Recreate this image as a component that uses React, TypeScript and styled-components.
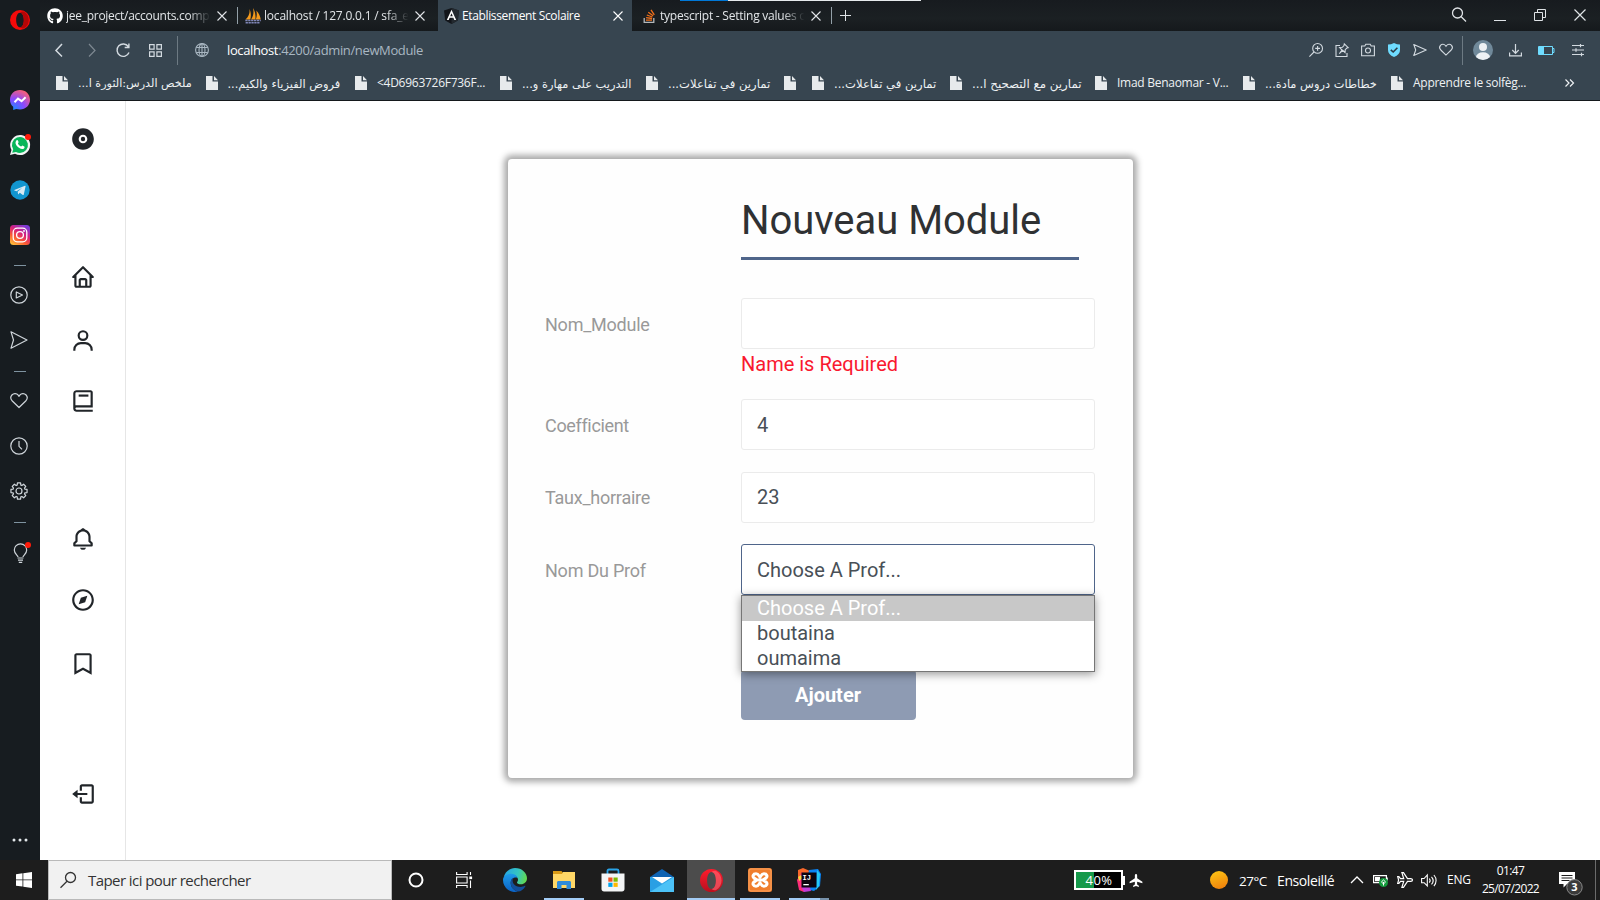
import React from 'react';
import styled, { createGlobalStyle, css } from 'styled-components';
import { BiHome, BiUser, BiBook, BiBell, BiCompass, BiBookmark, BiLogOut, BiSolidDisc } from 'react-icons/bi';
import { FaGithub } from 'react-icons/fa';

const ui = `"Open Sans", "Noto Sans", sans-serif`;

const Global = createGlobalStyle`
  html, body { margin: 0; background: #fff; }
  *, *::before, *::after { box-sizing: border-box; }
  svg { display: block; flex: none; overflow: visible; }
`;

const Desktop = styled.div`
  width: 1600px;
  height: 900px;
  overflow: hidden;
  display: flex;
  flex-direction: column;
  font-family: ${ui};
`;
const Browser = styled.div`
  height: 860px;
  display: flex;
`;

/* ---------- Opera side panel ---------- */
const SidePanel = styled.aside`
  width: 40px;
  background: #171c20;
  color: #cfd5da;
  display: flex;
  flex-direction: column;
  align-items: center;
`;
const PanelLogo = styled.div`
  height: 77.5px;
  padding-top: 10px;
`;
const PanelItem = styled.div<{ $line?: boolean }>`
  position: relative;
  height: 45px;
  display: flex;
  align-items: center;
  padding: ${p => (p.$line ? '0 2px 1.5px 0' : '0')};
`;
const PanelRule = styled.div`
  height: 16px;
  width: 12px;
  display: flex;
  align-items: center;
  &::before { content: ''; width: 12px; height: 1px; background: #7f93a0; }
`;
const Dot = styled.i`
  position: absolute;
  right: -1px;
  top: 11px;
  width: 6px;
  height: 6px;
  border-radius: 50%;
  background: #ff1b0a;
`;
const PanelMore = styled.div`
  margin-top: auto;
  height: 40px;
`;

const Main = styled.div`
  flex: 1;
  min-width: 0;
  display: flex;
  flex-direction: column;
`;

/* ---------- Tabs ---------- */
const TabBar = styled.div`
  position: relative;
  height: 31px;
  display: flex;
  align-items: center;
  background: linear-gradient(#171b1f, #1b2023 60%, #15191c);
  color: #dfe3e6;
  font-size: 12px;
`;
const Tab = styled.div<{ $w: number; $pad: number; $active?: boolean }>`
  width: ${p => p.$w}px;
  padding-left: ${p => p.$pad}px;
  height: 31px;
  display: flex;
  align-items: center;
  background: ${p => (p.$active ? '#374550' : 'transparent')};
  color: ${p => (p.$active ? '#fff' : '#e2e5e8')};
`;
const TabIcon = styled.span<{ $w: number }>`
  width: ${p => p.$w}px;
  flex: none;
`;
const TabTitle = styled.span<{ $ls: number; $fade?: boolean }>`
  width: 146px;
  flex: none;
  margin-right: 5px;
  white-space: nowrap;
  line-height: 18px;
  letter-spacing: ${p => p.$ls}px;
  ${p => p.$fade && css`mask-image: linear-gradient(90deg, #000 84%, transparent 99%);`}
`;
const TabSplit = styled.div`
  width: 1px;
  height: 17px;
  background: #93a0a8;
`;
const TopStrip = styled.div`
  position: absolute;
  left: 640px;
  top: 0;
  width: 241px;
  height: 1px;
  background: linear-gradient(90deg, #0078d7 48px, #e6eaec 48px);
`;
const NewTab = styled.div`
  padding-left: 8px;
  flex: 1;
`;
const WindowButtons = styled.div`
  display: flex;
  gap: 28px;
  padding: 0 14px 1px 0;
  align-items: center;
`;

/* ---------- Address bar ---------- */
const Toolbar = styled.div`
  height: 38px;
  display: flex;
  align-items: center;
  background: #374550;
  color: #d3dae0;
`;
const NavButtons = styled.div`
  width: 137px;
  padding-left: 11px;
  display: grid;
  grid-template-columns: 33px 32px 33px 30px;
  align-items: center;
`;
const BarSplit = styled.div`
  width: 1px;
  height: 29px;
  background: #6d7a83;
`;
const Address = styled.div`
  flex: 1;
  display: flex;
  align-items: center;
  gap: 18px;
  padding-left: 17px;
  font-size: 13px;
  letter-spacing: -0.37px;
  line-height: 18px;
  color: #a9b7c2;
  b { font-weight: 400; color: #fff; }
`;
const ToolIcons = styled.div<{ $gap: number; $l: number; $r: number }>`
  display: flex;
  align-items: center;
  gap: ${p => p.$gap}px;
  padding: 0 ${p => p.$r}px 0 ${p => p.$l}px;
`;

/* ---------- Bookmarks ---------- */
const Bookmarks = styled.div`
  height: 32px;
  padding: 0 0 3px 16px;
  display: grid;
  grid-template-columns: 149.5px 149.5px 145px 146px 138px 28px 138px 145px 148px 148px 174px 1fr;
  align-items: center;
  background: #374550;
  border-bottom: 1px solid #14181b;
  color: #eef1f3;
  font-size: 12px;
`;
const Bookmark = styled.div`
  display: flex;
  align-items: center;
  gap: 10px;
`;
const BookmarkLabel = styled.span<{ $size: number; $rtl?: boolean }>`
  white-space: nowrap;
  line-height: 16px;
  padding-top: ${p => (p.$rtl ? 1 : 0)}px;
  font-size: ${p => p.$size}px;
  letter-spacing: ${p => (p.$rtl ? '0' : '-0.27px')};
  direction: ${p => (p.$rtl ? 'rtl' : 'ltr')};
  font-family: ${p => (p.$rtl ? '"DejaVu Sans", sans-serif' : ui)};
`;

/* ---------- Web page ---------- */
const Page = styled.div`
  flex: 1;
  display: flex;
  background: #fff;
`;
const AppNav = styled.nav`
  width: 86px;
  border-right: 1px solid #e6e6e6;
  color: #212529;
  display: flex;
  flex-direction: column;
  align-items: center;
`;
const NavIcon = styled.div<{ $gap: number }>`
  margin-top: ${p => p.$gap}px;
  height: 26px;
  font-size: 26px;
`;
const Content = styled.main`
  flex: 1;
  padding: 58px 0 0 382px;
  font-family: Roboto, sans-serif;
`;
const Card = styled.section`
  width: 625px;
  height: 619px;
  padding: 36px 38px 0 37px;
  border-radius: 4px;
  background: #fefefe;
  box-shadow: 0 0 6px 4px #a9a9a9;
`;
const Heading = styled.h1`
  margin: 0 0 38px 196px;
  width: 338px;
  height: 65px;
  padding-top: 2px;
  border-bottom: 3px solid #4f658a;
  font-size: 40px;
  font-weight: 400;
  line-height: 48px;
  letter-spacing: -0.04px;
  color: #2f3133;
`;
const Row = styled.div<{ $after: number }>`
  display: grid;
  grid-template-columns: 196px 354px;
  margin-bottom: ${p => p.$after}px;
`;
const Label = styled.label<{ $line?: number; $ls?: number }>`
  font-size: 18px;
  letter-spacing: ${p => p.$ls ?? -0.24}px;
  line-height: ${p => p.$line ?? 53}px;
  height: 51px;
  color: #999;
`;
const Field = styled.div`
  position: relative;
`;
const Input = styled.div<{ $focus?: boolean; $line?: number }>`
  height: 51px;
  padding: 0 15px;
  border: 1px solid ${p => (p.$focus ? '#4f658a' : '#ebebeb')};
  border-radius: 3px;
  background: #fff;
  font-size: 20px;
  line-height: ${p => p.$line ?? 51}px;
  color: #495057;
`;
const FieldError = styled.div`
  margin-bottom: -30px;
  height: 30px;
  line-height: 30px;
  font-size: 20px;
  color: #f9182f;
`;
const Menu = styled.ul`
  position: absolute;
  left: 0;
  top: 51px;
  width: 354px;
  margin: 0;
  padding: 0;
  list-style: none;
  border: 1px solid #767676;
  background: #fff;
  box-shadow: 0 2px 9px rgba(0, 0, 0, 0.42);
`;
const Option = styled.li<{ $on?: boolean }>`
  height: 25px;
  padding-left: 15px;
  font-size: 20px;
  line-height: 25px;
  color: ${p => (p.$on ? '#fff' : '#495057')};
  background: ${p => (p.$on ? '#c8c8c8' : '#fff')};
`;
const Submit = styled.button`
  display: block;
  width: 175px;
  height: 50px;
  margin-left: 196px;
  border: 0;
  border-radius: 4px;
  padding: 0 1px 0 0;
  background: #8e9bb3;
  color: #fff;
  font: bold 20px/50px Roboto, sans-serif;
`;

/* ---------- Taskbar ---------- */
const Taskbar = styled.footer`
  height: 40px;
  display: flex;
  background: #1d1d1d;
  color: #fff;
`;
const StartButton = styled.div`
  width: 48px;
  display: grid;
  place-items: center;
`;
const SearchBox = styled.div`
  width: 344px;
  border: 1px solid #b9b9b9;
  background: #f1f1f1;
  display: flex;
  align-items: center;
  gap: 12px;
  padding-left: 11px;
  color: #333;
  font-size: 15px;
  letter-spacing: -0.57px;
`;
const Tile = styled.div<{ $gap?: number; $active?: boolean; $bar?: 'short' | 'full' | 'split' }>`
  width: 48px;
  margin-left: ${p => p.$gap ?? 0}px;
  display: flex;
  align-items: center;
  justify-content: center;
  position: relative;
  background: ${p => (p.$active ? '#4c4c4c' : 'transparent')};
  ${p => p.$bar && css`
    &::after {
      content: '';
      position: absolute;
      bottom: 0;
      left: ${p.$bar === 'full' ? 0 : 4}px;
      right: ${p.$bar === 'full' ? 0 : 4}px;
      height: 2px;
      background: ${p.$bar === 'split' ? 'linear-gradient(90deg, #a3ccf5 31px, #7892ab 31px)' : '#a3ccf5'};
    }
  `}
`;
const Tray = styled.div`
  margin-left: auto;
  width: 526px;
  display: grid;
  grid-template-columns: 61px 75px 29px 38px 73px 23px 24px 24px 26px 21px 87px 32px 1fr;
  align-items: center;
`;
const BatteryGauge = styled.div`
  position: relative;
  width: 49px;
  height: 20px;
  border: 2px solid #fff;
  background: linear-gradient(90deg, #16994a 18px, #000 18px);
  text-align: center;
  font-size: 13px;
  line-height: 16px;
  letter-spacing: 0.4px;
  padding-left: 1px;
  &::after {
    content: '';
    position: absolute;
    right: -4px;
    top: 4px;
    width: 2px;
    height: 9px;
    background: #fff;
  }
`;
const Sun = styled.div`
  width: 18px;
  height: 18px;
  border-radius: 50%;
  background: linear-gradient(160deg, #ffc814, #ee7a0c);
`;
const TrayText = styled.span<{ $size: number; $ls: number; $up?: boolean }>`
  font-size: ${p => p.$size}px;
  letter-spacing: ${p => p.$ls}px;
  line-height: 18px;
  white-space: nowrap;
  padding: ${p => (p.$up ? '0 0 1px' : '1px 0 0')};
`;
const Clock = styled.div`
  text-align: center;
  font-size: 12px;
  line-height: 18px;
  letter-spacing: -0.65px;
  padding: 0 2px 1px 0;
`;
const Notifications = styled.div`
  padding: 7px 0 0 4px;
`;
const ShowDesktop = styled.div`
  height: 40px;
  border-left: 1px solid #6b6b6b;
  justify-self: end;
  width: 5px;
`;

/* ---------- Drawings ---------- */
type LineProps = { w?: number; h?: number; vb?: string; sw?: number; children: React.ReactNode };
const Line = ({ w = 14, h, vb, sw = 1, children }: LineProps) => (
  <svg width={w} height={h ?? w} viewBox={vb ?? `0 0 ${w} ${h ?? w}`} fill="none" stroke="currentColor" strokeWidth={sw}>
    {children}
  </svg>
);
const Close = () => <Line w={10} sw={1.1}><path d="M.5.5l9 9M9.500.5l-9 9" /></Line>;
const PageIcon = () => (
  <svg width="12" height="14" viewBox="0 0 12 14" fill="#e7eaec">
    <path d="M0 0h6.500v5.500H12V14H0z" /><path d="M8 0l4 4.300H8z" />
  </svg>
);
const OperaLogo = ({ size, id }: { size: number; id: string }) => (
  <svg width={size} height={size} viewBox="0 0 24 24">
    <defs>
      <linearGradient id={id} x1="0" y1="0" x2="0" y2="1">
        <stop offset="0" stopColor="#ff1b2d" /><stop offset="1" stopColor="#b8101f" />
      </linearGradient>
    </defs>
    <path fillRule="evenodd" fill={id === 'op1' ? '#f50a0a' : `url(#${id})`} d="M12 0a12 12 0 100 24a12 12 0 000-24zM12 3.200c2.900 0 4.600 4 4.600 8.800s-1.700 8.800-4.600 8.800S7.400 16.800 7.400 12 9.100 3.200 12 3.200z" />
    <path fill={id === 'op1' ? '#b30606' : '#ff6b76'} opacity={id === 'op1' ? 1 : 0.6} d="M12 3.200c1.500-1.200 3.200-1.700 4.800-1.200C20.500 4 22.500 8 22.500 12s-2 8-5.700 10c-1.600.5-3.300 0-4.800-1.200 2.900 0 4.600-4 4.600-8.800S14.900 3.200 12 3.200z" />
  </svg>
);
const Messenger = () => (
  <svg width="20" height="20" viewBox="0 0 20 20">
    <defs>
      <radialGradient id="ms" cx=".2" cy="1" r="1.1">
        <stop offset="0" stopColor="#1a8cff" /><stop offset=".5" stopColor="#8a48ff" /><stop offset="1" stopColor="#ff6070" />
      </radialGradient>
    </defs>
    <path fill="url(#ms)" d="M10 0C4.300 0 0 4.200 0 9.700c0 2.900 1.200 5.400 3.200 7.100V20l3-1.100c1.200.3 2.500.5 3.800.5 5.700 0 10-4.200 10-9.700S15.700 0 10 0z" />
    <path fill="none" stroke="#fff" strokeWidth="2" d="M4.500 12.300L8 8.600l3.600 2.500 4-3.800" />
  </svg>
);
const WhatsApp = () => (
  <svg width="20" height="20" viewBox="0 0 20 20">
    <path fill="#f2f4f4" d="M0 20l1.500-5A10 10 0 1110 20a10 10 0 01-5-1.300z" />
    <path fill="#08b65a" d="M2.200 17.800l1-3.500A8 8 0 1110 18a8 8 0 01-4-1.100z" />
    <path fill="#fff" d="M6.600 5.300c.6-.5 1.100-.3 1.400.4l.6 1.400c.1.500-.7 1.100-.7 1.500.7 1.400 1.700 2.300 3.200 3 .5 0 1-1.100 1.400-1l1.700.8c.7.300.3 1.500-.2 2-1.200 1-2.900.7-4.700-.3-1.900-1.100-3.300-2.900-3.700-4.500-.2-1.300.2-2.500 1-3.300z" />
  </svg>
);
const Telegram = () => (
  <svg width="20" height="20" viewBox="0 0 20 20">
    <circle cx="10" cy="10" r="9.700" fill="#1195cf" />
    <path fill="#d6e9f3" d="M4.300 9.900L15 5.700c.5-.1.700.1.600.6l-1.800 8.200c-.1.600-.5.700-1 .4L9.800 12.700l-1.600 1.700-.6-2.700 4.600-4-5.700 3.500-2.200-.7z" />
  </svg>
);
const Instagram = () => (
  <svg width="20" height="20" viewBox="0 0 20 20">
    <defs>
      <linearGradient id="ig" x1=".1" y1="1" x2=".7" y2="0">
        <stop offset="0" stopColor="#ffc83c" /><stop offset=".35" stopColor="#fb5a32" /><stop offset=".65" stopColor="#d6207e" /><stop offset="1" stopColor="#7a3ad6" />
      </linearGradient>
    </defs>
    <rect width="20" height="20" rx="3.500" fill="url(#ig)" />
    <g fill="none" stroke="#fff" strokeWidth="1.300">
      <rect x="3.200" y="3.200" width="13.600" height="13.600" rx="4" /><circle cx="10" cy="10" r="3.400" />
    </g>
    <circle cx="14" cy="6" r=".9" fill="#fff" />
  </svg>
);
const heart = 'M9 15.500L2.300 9C.6 7.200.4 4.700 1.900 3 3.700 1 6.700 1.200 8.200 3.200L9 4.300l.8-1.100C11.300 1.200 14.300 1 16.100 3c1.500 1.700 1.300 4.200-.4 6z';
const sendShape = 'M1 .8L17 9 1 17.200 3.500 9z';
const gear = (() => {
  const pts: string[] = [];
  for (let i = 0; i < 8; i++) {
    const a = (i * Math.PI) / 4;
    [[-0.3, 6.2], [-0.19, 8.2], [0.19, 8.2], [0.3, 6.2]].forEach(([d, r]) =>
      pts.push(`${(9 + r * Math.sin(a + d)).toFixed(2)} ${(9 - r * Math.cos(a + d)).toFixed(2)}`));
  }
  return `M${pts.join('L')}z`;
})();

const Angular = () => (
  <svg width="15" height="16" viewBox="0 0 15 16">
    <path fill="#12151a" d="M7.500 0L15 2.600l-1.200 9.800L7.500 16l-6.300-3.600L0 2.600z" />
    <path fill="#23292f" d="M7.500 0L15 2.600l-1.200 9.800L7.500 16z" />
    <path fill="#fff" fillRule="evenodd" d="M7.500 1.800l4.700 10.300h-1.900l-.9-2.300H5.600l-.9 2.300H2.800zM7.500 5.300L6.200 8.300h2.600z" />
  </svg>
);
const Sails = () => (
  <svg width="16" height="16" viewBox="0 0 16 16">
    <path fill="#f59a1c" d="M4.500 1C5 5 4 8.500.5 11.500H5.300C6.200 8 6 4 4.500 1zM8 0c1 4 .5 8-2 11.500h4.400C10.900 7.500 10 3 8 0zM11.300 2.500c.8 3.500.6 6-.5 9h4.900c-.4-3.500-1.900-6.500-4.400-9z" />
    <path fill="none" stroke="#8087b8" strokeWidth="1.500" strokeDasharray="2.300 .6" d="M.3 12.500h15.500M.6 14.700h14" />
  </svg>
);
const StackOverflow = () => (
  <svg width="13" height="14" viewBox="0 0 13 14" fill="none">
    <path stroke="#b3b7ba" strokeWidth="1.300" d="M1.200 9v4.300h9.600V9" />
    <path stroke="#f2701a" strokeWidth="1.300" d="M3 11.200h6M3.100 8.700l6 .8M3.800 6l5.600 2M5.300 3.200l4.800 3.600M8 .9l3.300 5" />
  </svg>
);
const Edge = () => (
  <svg width="24" height="24" viewBox="0 0 24 24">
    <defs>
      <linearGradient id="e1" x1="0" y1=".3" x2="1" y2=".5"><stop offset="0" stopColor="#25a5e6" /><stop offset=".6" stopColor="#35c6c0" /><stop offset="1" stopColor="#62d94f" /></linearGradient>
      <linearGradient id="e2" x1="0" y1="0" x2="0" y2="1"><stop offset="0" stopColor="#1d9bea" /><stop offset="1" stopColor="#0b62c4" /></linearGradient>
    </defs>
    <path fill="url(#e1)" d="M.6 9.500C1.800 4 6.500 0 12 0c7 0 12 5 12 10.300 0 3.500-2.700 6-6 6-2.400 0-4-.9-4-1.800 0-.7 1-1 1-2.800 0-2.400-2.500-4.700-6-4.700-3.800 0-6.600 1-8.400 2.500z" />
    <path fill="url(#e2)" d="M0 12c0-3.500 3.700-6.200 8-6.200 3 0 5.700 1.400 6.700 3.900-4-1.200-7 1.300-7 5.300 0 4.500 3.500 7.500 7.300 8.600A12 12 0 010 12z" />
    <path fill="#134f9b" d="M7.700 15c0-2.500 1-4.500 2.800-5.400-.7 1.200-.9 2-.9 3.200 0 3.500 3.800 6.200 7.900 6.200 1.700 0 3.300-.6 4.300-1.200.5-.2.800.1.500.6-1.600 3-4.300 4.800-7.300 5.200-3.800-1.100-7.300-4.100-7.300-8.600z" />
  </svg>
);
const Explorer = () => (
  <svg width="22" height="20" viewBox="0 0 22 20">
    <path fill="#d99a16" d="M0 1h8.500l1.500 2v3H0z" />
    <path fill="#ffd766" d="M0 4h9l1-2h12v16H0z" />
    <path fill="#2f8bd9" d="M4 19v-6.500c0-1 .7-1.500 1.500-1.500h11c.8 0 1.500.5 1.500 1.500V19h-4.500v-4h-5v4z" />
  </svg>
);
const Store = () => (
  <svg width="24" height="24" viewBox="0 0 24 24">
    <path fill="none" stroke="#2aa4e8" strokeWidth="1.800" d="M6.500 7V3c0-.8.500-1.500 1.500-1.500h8c1 0 1.500.7 1.500 1.500v4" />
    <path fill="#f4f5f6" d="M.5 5.500h23V21c0 1.500-1 2.500-2.500 2.500H3C1.500 23.500.5 22.500.5 21z" />
    <path fill="#f25022" d="M7.300 9.500h4.200v4.200H7.300z" /><path fill="#7fba00" d="M12.500 9.500h4.200v4.200h-4.200z" />
    <path fill="#00a4ef" d="M7.300 14.700h4.200v4.200H7.300z" /><path fill="#ffb900" d="M12.500 14.700h4.200v4.200h-4.200z" />
  </svg>
);
const Mail = () => (
  <svg width="24" height="23" viewBox="0 0 24 23">
    <path fill="#0e63b3" d="M0 8L12 0l12 8-2 2H2z" />
    <path fill="#2a9fe4" d="M0 8h24v15H0z" />
    <path fill="#4cc2f7" d="M24 8v15H0z" />
    <path fill="#fff" d="M2 8h20l-10 6.500z" />
  </svg>
);
const Xampp = () => (
  <svg width="24" height="24" viewBox="0 0 24 24">
    <rect width="24" height="24" rx="2.500" fill="#f07d2c" /><rect x="1" y="1" width="22" height="22" rx="2" fill="none" stroke="#f9a563" />
    <path fill="none" stroke="#fff" strokeWidth="3" strokeLinejoin="round" d="M12 9C10.500 8 11 5.800 8 5.800S4.200 8.500 6 10s2 1 2.600 2c-.6 1-.8.500-2.600 2s-1 4.200 2 4.200S10.500 16 12 15c1.500 1 1 3.200 4 3.200s3.800-2.700 2-4.200-2-1-2.600-2c.6-1 .8-.5 2.600-2s1-4.200-2-4.200S13.500 8 12 9zM9 12h6" />
  </svg>
);
const IdeaText = styled.text`
  font: bold 8px "Liberation Mono", monospace;
  fill: #fff;
`;
const Idea = () => (
  <svg width="24" height="24" viewBox="0 0 24 24">
    <path fill="#f9682a" d="M1 2l5-2 7 3-6 8-6 2z" /><path fill="#fe2d78" d="M0 12l5-8 7 6-5 14-5-2z" />
    <path fill="#0a84f5" d="M12 2l9-1 3 5-1 12-6 5-8-2z" /><path fill="#25c8f5" d="M20 2l3 4-1 12-3 4z" /><path fill="#c03bd8" d="M4 18l8-2 2 7-7 1z" />
    <path fill="#fdd13a" d="M1 9l3-2 2 3-4 3z" />
    <path fill="#0b0510" d="M4.500 4.500h15v15h-15z" /><path fill="#fff" d="M6.300 16h5.500v1.300H6.300z" />
    <IdeaText x="5.600" y="11.600" textLength="8.500" lengthAdjust="spacingAndGlyphs">IJ</IdeaText>
  </svg>
);
const planePath = 'M8 .5c.8 0 1.300.8 1.300 1.800v3.200l6 4v1.600l-6-1.800v3.200l2 1.600v1.200L8 14.400l-3.300.9v-1.200l2-1.600V9.300l-6 1.800V9.500l6-4V2.300C6.700 1.300 7.200.5 8 .5z';
const BadgeText = styled.text`
  font: bold 11px ${ui};
  fill: #fff;
  text-anchor: middle;
`;

/* ---------- Data ---------- */
const bookmarks: { text: string; size: number; rtl?: boolean }[] = [
  { text: 'ملخص الدرس:الثورة ا...', size: 11.2, rtl: true },
  { text: 'فروض الفيزياء والكيم...', size: 11.4, rtl: true },
  { text: '<4D6963726F736F...', size: 12 },
  { text: 'التدريب على مهارة و...', size: 11.4, rtl: true },
  { text: 'تمارين في تفاعلات...', size: 11.6, rtl: true },
  { text: '', size: 12 },
  { text: 'تمارين في تفاعلات...', size: 11.6, rtl: true },
  { text: 'تمارين مع التصحيح ا...', size: 11.8, rtl: true },
  { text: 'Imad Benaomar - V...', size: 12 },
  { text: 'خطاطات دروس مادة...', size: 11.4, rtl: true },
  { text: 'Apprendre le solfèg...', size: 12 },
];
const navIcons = [
  { Icon: BiSolidDisc, gap: 25 },
  { Icon: BiHome, gap: 112 },
  { Icon: BiUser, gap: 38 },
  { Icon: BiBook, gap: 34 },
  { Icon: BiBell, gap: 112 },
  { Icon: BiCompass, gap: 35 },
  { Icon: BiBookmark, gap: 38 },
  { Icon: BiLogOut, gap: 104 },
];

const Side = () => (
  <SidePanel>
    <PanelLogo><OperaLogo size={20} id="op1" /></PanelLogo>
    <PanelItem><Messenger /></PanelItem>
    <PanelItem><WhatsApp /><Dot /></PanelItem>
    <PanelItem><Telegram /></PanelItem>
    <PanelItem><Instagram /></PanelItem>
    <PanelRule />
    <PanelItem $line><Line w={18} sw={1.2}><circle cx="9" cy="9" r="8.200" /><path d="M6.300 6v6l6.200-3z" strokeLinejoin="round" /></Line></PanelItem>
    <PanelItem $line><Line w={18} sw={1.2}><path d={sendShape} strokeLinejoin="round" /></Line></PanelItem>
    <PanelRule />
    <PanelItem $line><Line w={18} sw={1.2}><path d={heart} strokeLinejoin="round" /></Line></PanelItem>
    <PanelItem $line><Line w={18} sw={1.2}><circle cx="9" cy="9" r="8.200" /><path d="M9 4v5.300l3 3" /></Line></PanelItem>
    <PanelItem $line><Line w={18} sw={1.2}><path d={gear} strokeLinejoin="round" /><circle cx="9" cy="9" r="3" /></Line></PanelItem>
    <PanelRule />
    <PanelItem>
      <Line w={20} sw={1.2}><path d="M8 14c0-1.500-3.700-3-3.700-7a6.200 6.200 0 0112.400 0c0 4-3.700 5.500-3.700 7M7.500 15h6M8 17.200h5M8.800 19.400h3.400" /></Line>
      <Dot />
    </PanelItem>
    <PanelMore>
      <svg width="16" height="4" viewBox="0 0 16 4" fill="#e3e7ea" transform="translate(0 18)"><circle cx="2" cy="2" r="1.500" /><circle cx="8" cy="2" r="1.500" /><circle cx="14" cy="2" r="1.500" /></svg>
    </PanelMore>
  </SidePanel>
);

const Tabs = () => (
  <TabBar>
    <TopStrip />
    <Tab $w={197} $pad={7}>
      <TabIcon $w={19}><FaGithub size={16} color="#fff" /></TabIcon>
      <TabTitle $ls={-0.27} $fade>jee_project/accounts.comp</TabTitle>
      <Close />
    </Tab>
    <TabSplit />
    <Tab $w={200} $pad={7}>
      <TabIcon $w={19}><Sails /></TabIcon>
      <TabTitle $ls={-0.2} $fade>localhost / 127.0.0.1 / sfa_e</TabTitle>
      <Close />
    </Tab>
    <Tab $w={194} $pad={6} $active>
      <TabIcon $w={18}><Angular /></TabIcon>
      <TabTitle $ls={-0.36}>Etablissement Scolaire</TabTitle>
      <Close />
    </Tab>
    <Tab $w={199} $pad={11}>
      <TabIcon $w={17}><StackOverflow /></TabIcon>
      <TabTitle $ls={-0.24} $fade>typescript - Setting values o</TabTitle>
      <Close />
    </Tab>
    <TabSplit />
    <NewTab><Line w={11}><path d="M5.500 0v11M0 5.500h11" /></Line></NewTab>
    <WindowButtons>
      <Line w={14} sw={1.3}><circle cx="5.500" cy="5" r="5" /><path d="M9 8.500l5 5" /></Line>
      <Line w={12} h={12}><path d="M0 11.500h12" /></Line>
      <Line w={12}><path d="M.5 3.500h8v8h-8zM3.500 3.500v-3h8v8h-3" /></Line>
      <Line w={12} sw={1.2}><path d="M.5.5l11 11M11.500.5l-11 11" /></Line>
    </WindowButtons>
  </TabBar>
);

const AddressBar = () => (
  <Toolbar>
    <NavButtons>
      <Line w={14} sw={1.5}><path d="M11 1L5 7.500l6 6" /></Line>
      <Line w={14} sw={1.2}><g opacity=".45"><path d="M5 1l6 6.500-6 6" /></g></Line>
      <Line w={14} sw={1.4}><path d="M12.300 3.500A6.200 6.200 0 1013 9.500M12.900.5v4H8.700" /></Line>
      <Line w={13} sw={1.2}><path d="M.6.6h4.500v4.500H.6zM7.900.6h4.500v4.500H7.900zM.6 7.900h4.500v4.500H.6zM7.900 7.900h4.500v4.500H7.900z" /></Line>
    </NavButtons>
    <BarSplit />
    <Address>
      <Line w={14} sw={1.1}><circle cx="7" cy="7" r="6.400" /><ellipse cx="7" cy="7" rx="3" ry="6.400" /><path d="M1.300 4.500h11.400M1.300 9.500h11.400M7 .6v12.800" /></Line>
      <span><b>localhost</b>:4200/admin/newModule</span>
    </Address>
    <ToolIcons $gap={12} $l={0} $r={9}>
      <Line w={14} sw={1.1}><circle cx="8.600" cy="5.400" r="4.900" /><path d="M5 9L.4 13.600M8.600 3v4.800M6.200 5.400H11" /></Line>
      <Line w={14} sw={1.1}><path d="M5 2.500H1v11h11V10" /><path d="M9.300.8l3.900 3.900-1.300.3-1.700 1.700-.2 2.800-2.300-2.200L4.300 10.700 7 7 4.600 4.500l2.800-.2L9 2.500z" /></Line>
      <Line w={14} sw={1.1}><path d="M.6 3h3.200l1-1.800h4.400l1 1.800h3.200v9.700H.6z" /><circle cx="7" cy="7.500" r="2.500" /></Line>
      <svg width="14" height="14" viewBox="0 0 14 14"><path fill="#6fdcff" d="M7 0c2 1 4 1.500 6 1.500V7c0 3-2 5.500-6 7-4-1.500-6-4-6-7V1.500C3 1.500 5 1 7 0z" /><path fill="none" stroke="#2b3a45" strokeWidth="1.600" d="M3.800 6.800L6.200 9l4.200-4.300" /></svg>
      <Line w={14} vb="0 0 18 18" sw={1.4}><path d="M1 2l16 7-16 7 2.500-7z" strokeLinejoin="round" /></Line>
      <Line w={14} vb="0 0 18 18" sw={1.4}><path d={heart} /></Line>
    </ToolIcons>
    <BarSplit />
    <ToolIcons $gap={16} $l={10} $r={16}>
      <svg width="20" height="20" viewBox="0 0 20 20"><defs><clipPath id="av"><circle cx="10" cy="10" r="10" /></clipPath></defs><circle cx="10" cy="10" r="10" fill="#70899a" /><g fill="#eef2f5" clipPath="url(#av)"><circle cx="10" cy="7" r="4" /><ellipse cx="10" cy="17.300" rx="7" ry="5" /></g></svg>
      <Line w={13} sw={1.2}><path d="M6.500 0v9M3.300 6l3.200 3.300L9.700 6M.6 8.500v3.400h11.800V8.500" /></Line>
      <svg width="17" height="9" viewBox="0 0 17 9"><path fill="none" stroke="#6fdcff" d="M.5.5h14v8H.5zM15 2.500h1v4h-1" /><path fill="#6fdcff" d="M1 1h5v7H1z" /></svg>
      <Line w={13} h={13} sw={1.2}><path d="M1 1.500h12M1 6h12M1 10.500h12M9.500 0v3.300M5 4.300v3.400M10.500 8.800v3.400" /></Line>
    </ToolIcons>
  </Toolbar>
);

const Form = () => (
  <Card>
    <Heading>Nouveau Module</Heading>
    <Row $after={50}>
      <Label>Nom_Module</Label>
      <Field><Input /><FieldError>Name is Required</FieldError></Field>
    </Row>
    <Row $after={22}><Label $ls={-0.34}>Coefficient</Label><Field><Input>4</Input></Field></Row>
    <Row $after={21}><Label $line={51}>Taux_horraire</Label><Field><Input $line={49}>23</Input></Field></Row>
    <Row $after={75}>
      <Label>Nom Du Prof</Label>
      <Field>
        <Input $focus>Choose A Prof...</Input>
        <Menu>
          <Option $on>Choose A Prof...</Option>
          <Option>boutaina</Option>
          <Option>oumaima</Option>
        </Menu>
      </Field>
    </Row>
    <Submit>Ajouter</Submit>
  </Card>
);

const Bottom = () => (
  <Taskbar>
    <StartButton>
      <svg width="16" height="16" viewBox="0 0 16 16" fill="#fff"><path d="M0 2.200l6.500-.9v6.200H0zM7.300 1.200L16 0v7.500H7.300zM0 8.300h6.500v6.300L0 13.700zM7.300 8.300H16V16l-8.700-1.200z" /></svg>
    </StartButton>
    <SearchBox>
      <Line w={16} sw={1.3}><circle cx="10.500" cy="5.500" r="5" /><path d="M7 9.300L.5 15.700" /></Line>
      Taper ici pour rechercher
    </SearchBox>
    <Tile><Line w={16} sw={2}><circle cx="8" cy="8" r="6.500" /></Line></Tile>
    <Tile><Line w={17} h={16} sw={1.1}><path d="M.6 0v2.500h10.500V0M.6 5h10.500v6H.6zM.6 16v-2.500h10.500V16M14.500 0v3M14.500 8.500V16" /><path d="M13.300 4.500h2.800v2.600h-2.800z" fill="#fff" stroke="none" /></Line></Tile>
    <Tile $gap={3}><Edge /></Tile>
    <Tile $gap={1} $bar="short"><Explorer /></Tile>
    <Tile $gap={1}><Store /></Tile>
    <Tile $gap={1}><Mail /></Tile>
    <Tile $gap={1} $active $bar="full"><OperaLogo size={23} id="op2" /></Tile>
    <Tile $gap={1} $bar="short"><Xampp /></Tile>
    <Tile $gap={1} $bar="split"><Idea /></Tile>
    <Tray>
      <BatteryGauge>40%</BatteryGauge>
      <svg width="14" height="15" viewBox="0 0 16 16" fill="#fff" transform="translate(-6 0)"><path d={planePath} /></svg>
      <Sun />
      <TrayText $size={13.5} $ls={-0.45}>27°C</TrayText>
      <TrayText $size={14} $ls={-0.4}>Ensoleillé</TrayText>
      <Line w={14} h={8} sw={1.3}><path d="M1 7l6-6 6 6" /></Line>
      <svg width="17" height="14" viewBox="0 0 17 14"><path fill="none" stroke="#fff" strokeWidth="1.200" d="M.6 2.600h12.800v7H.6z" /><path fill="#fff" d="M2 4h5v4.200H2zM13.500 4.500h1.300v3h-1.300z" /><circle cx="10.500" cy="9.500" r="4.500" fill="#149a3c" /><path fill="none" stroke="#fff" d="M10.500 12.500V9M8.800 9.500c0-1.500.7-2 1.700-2.600 1 .6 1.700 1.100 1.700 2.600-.6 1-2.800 1-3.400 0z" /></svg>
      <svg width="16" height="16" viewBox="0 0 16 16" fill="none" stroke="#fff" strokeWidth="1.200"><path transform="rotate(90 8 8)" d={planePath} /></svg>
      <Line w={17} h={13} sw={1.1}><path d="M.6 4.500h2.500L6.300 1v11L3.100 8.700H.6zM8.300 4.500c1 1.200 1 2.900 0 4.100M10.500 2.800c1.900 2.200 1.900 5.400 0 7.600M12.900 1c2.900 3.200 2.900 8 0 11.200" /></Line>
      <TrayText $size={12} $ls={-0.2} $up>ENG</TrayText>
      <Clock>01:47<br />25/07/2022</Clock>
      <Notifications>
        <svg width="25" height="26" viewBox="0 0 25 26"><path fill="#fff" d="M0 1h16v12H8l-3.500 3.500V13H0z" /><path stroke="#1d1d1d" d="M2.500 4.500h11M2.500 7h11M2.500 9.500h8" /><circle cx="15.500" cy="16.300" r="7.700" fill="#3a3a3a" stroke="#8a8a8a" /><BadgeText x="15.500" y="20.300">3</BadgeText></svg>
      </Notifications>
      <ShowDesktop />
    </Tray>
  </Taskbar>
);

export default function App() {
  return (
    <Desktop>
      <Global />
      <Browser>
        <Side />
        <Main>
          <Tabs />
          <AddressBar />
          <Bookmarks>
            {bookmarks.map((b, i) => (
              <Bookmark key={i}>
                <PageIcon />
                {b.text && <BookmarkLabel $size={b.size} $rtl={b.rtl}>{b.text}</BookmarkLabel>}
              </Bookmark>
            ))}
            <Line w={9} h={8} sw={1.2}><path d="M.5.5L4 4 .5 7.500M5 .5L8.500 4 5 7.500" /></Line>
          </Bookmarks>
          <Page>
            <AppNav>
              {navIcons.map(({ Icon, gap }, i) => <NavIcon key={i} $gap={gap}><Icon /></NavIcon>)}
            </AppNav>
            <Content><Form /></Content>
          </Page>
        </Main>
      </Browser>
      <Bottom />
    </Desktop>
  );
}
